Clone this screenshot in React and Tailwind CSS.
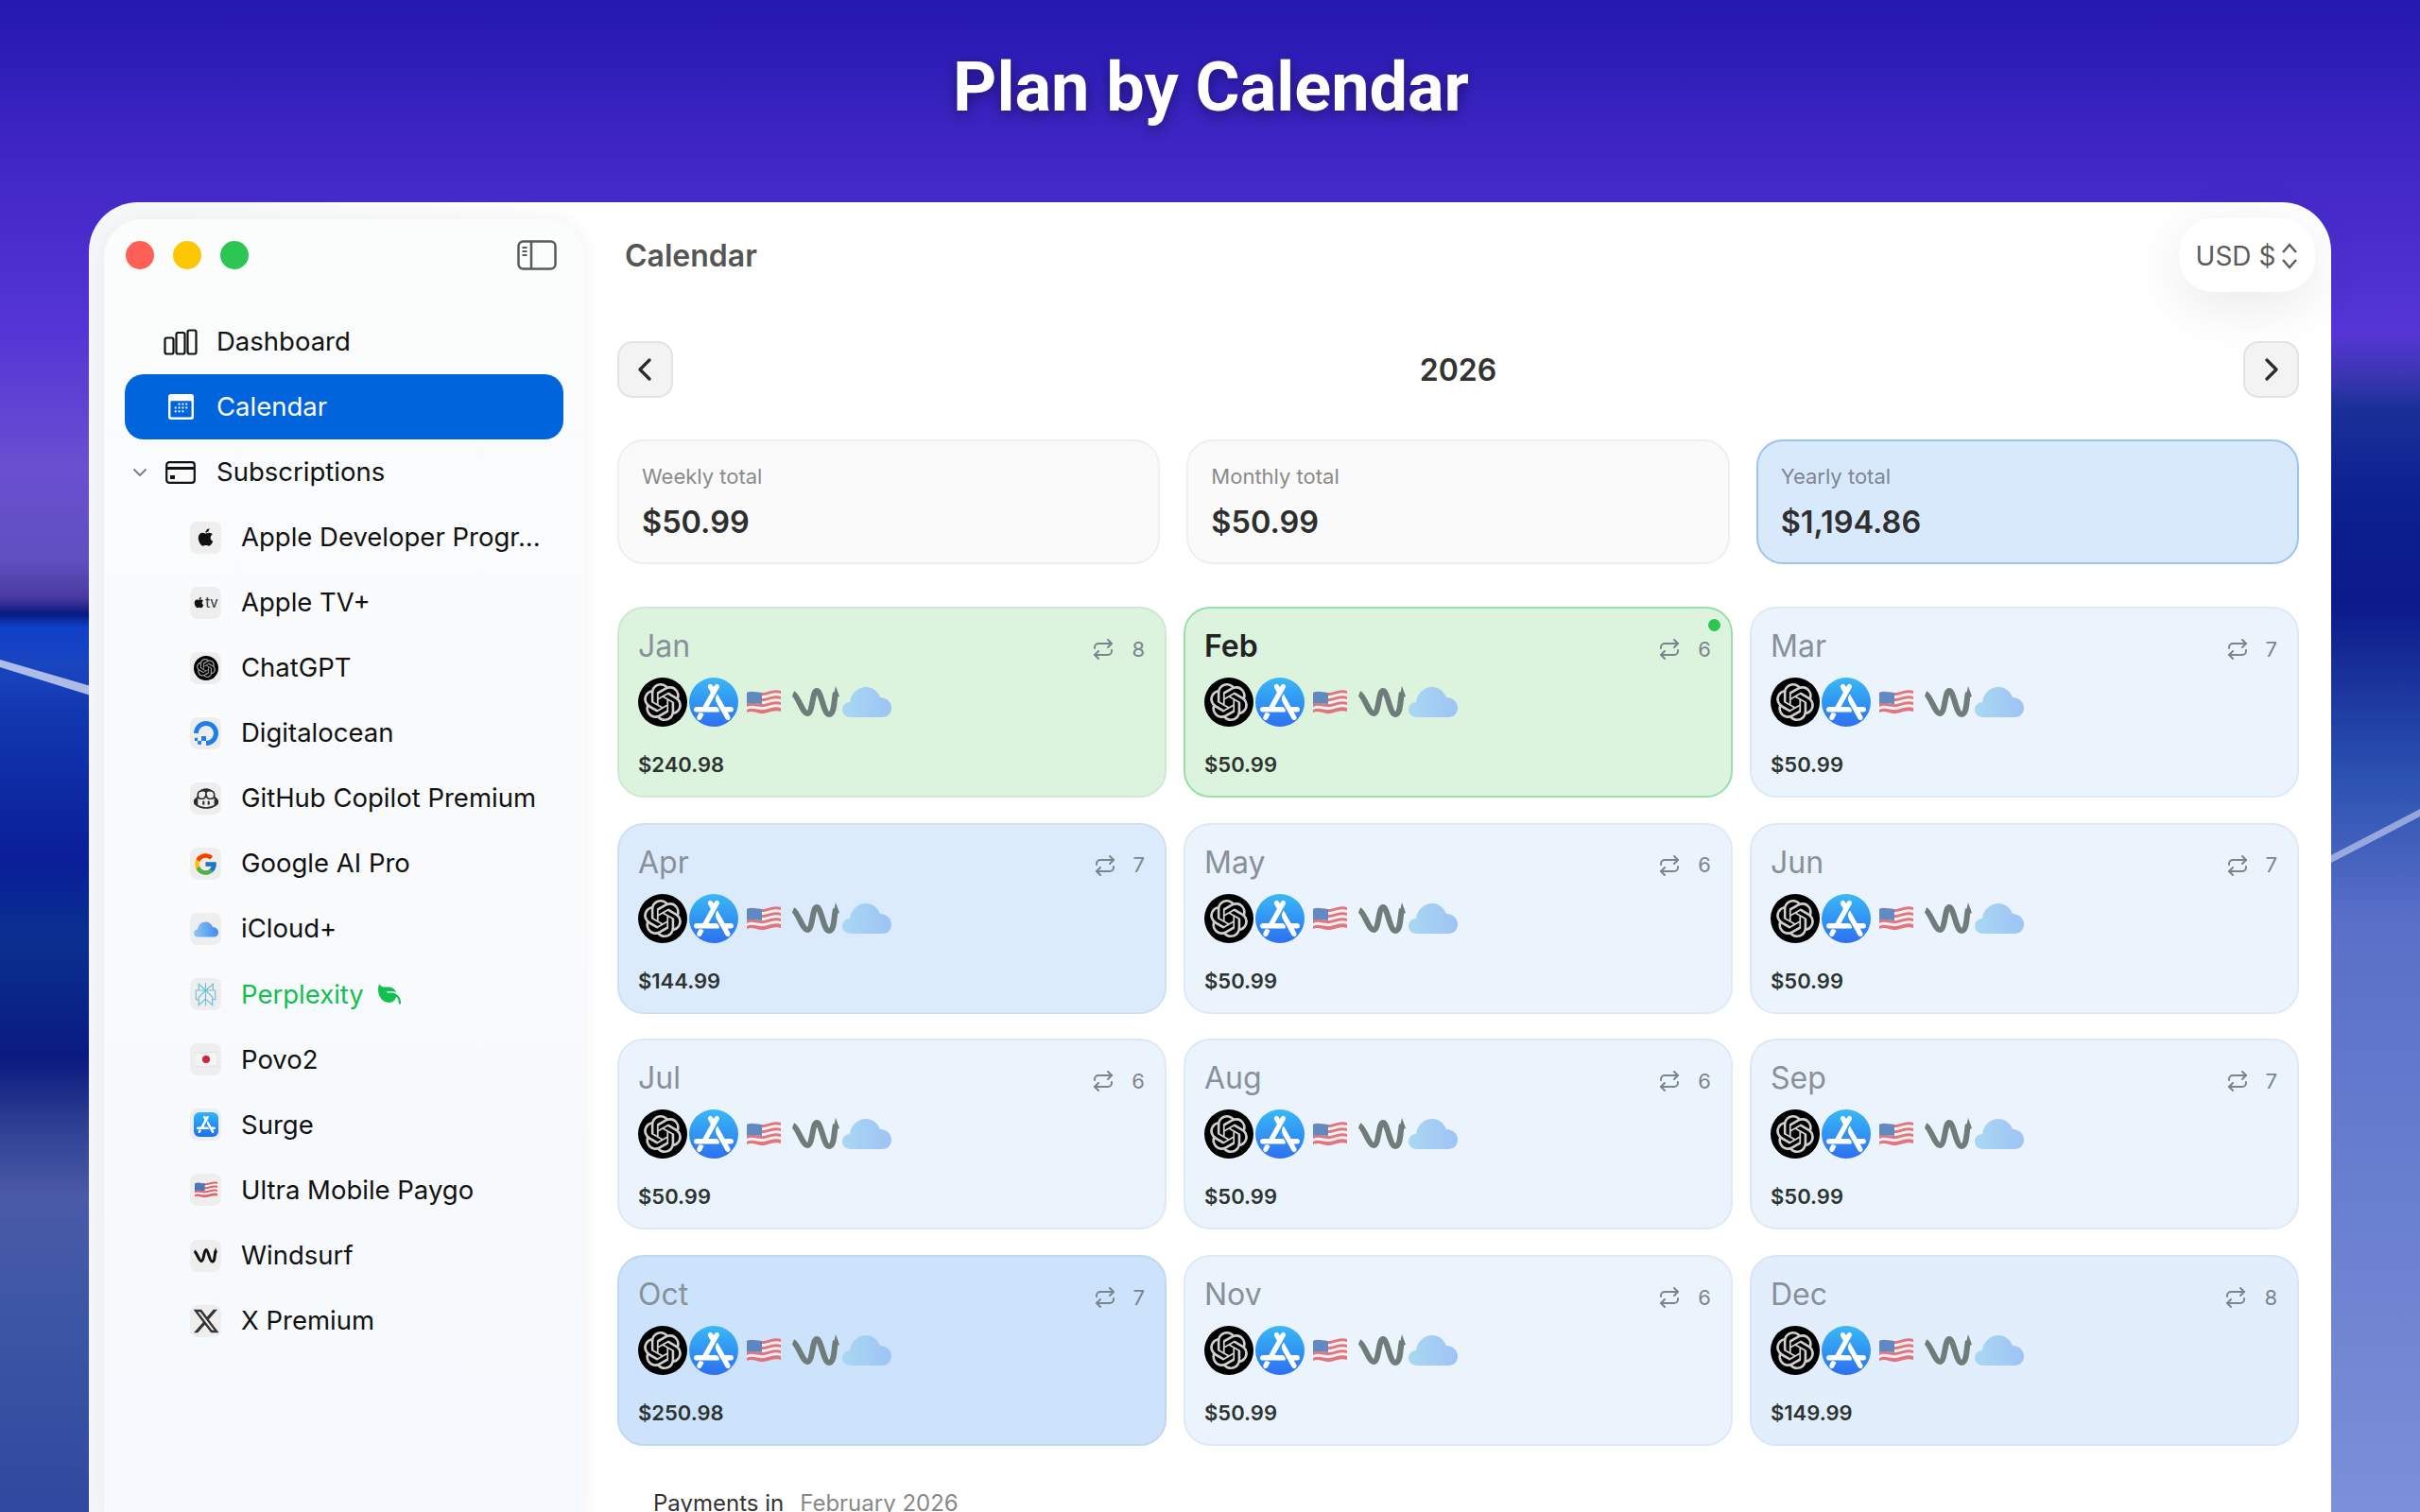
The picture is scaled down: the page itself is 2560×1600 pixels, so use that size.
import React from "react";
import { ChevronDown, ChevronLeft, ChevronRight, Repeat } from "lucide-react";
import { FaApple, FaLeaf, FaXTwitter } from "react-icons/fa6";
import { FcGoogle } from "react-icons/fc";
import { SiAppstore, SiDigitalocean, SiGithubcopilot, SiOpenai, SiPerplexity } from "react-icons/si";

const months = [
  { name: "Jan", count: 8, amount: "$240.98", tone: "green" },
  { name: "Feb", count: 6, amount: "$50.99", tone: "current" },
  { name: "Mar", count: 7, amount: "$50.99", tone: "light" },
  { name: "Apr", count: 7, amount: "$144.99", tone: "mid" },
  { name: "May", count: 6, amount: "$50.99", tone: "light" },
  { name: "Jun", count: 7, amount: "$50.99", tone: "light" },
  { name: "Jul", count: 6, amount: "$50.99", tone: "light" },
  { name: "Aug", count: 6, amount: "$50.99", tone: "light" },
  { name: "Sep", count: 7, amount: "$50.99", tone: "light" },
  { name: "Oct", count: 7, amount: "$250.98", tone: "strong" },
  { name: "Nov", count: 6, amount: "$50.99", tone: "light" },
  { name: "Dec", count: 8, amount: "$149.99", tone: "soft" },
];

const toneClass = {
  green: "bg-[#dcf3de] border-[#cfe8d3]",
  current: "bg-[#dcf3de] border-[#9adfa8]",
  light: "bg-[#ebf3fd] border-[#dfe9f5]",
  soft: "bg-[#e3eefc] border-[#d8e5f5]",
  mid: "bg-[#dcebfc] border-[#d0e0f3]",
  strong: "bg-[#cde2fb] border-[#c0d7f1]",
};

const FlagUS = ({ className }) => (
  <svg viewBox="0 0 36 30" className={className}>
    <path d="M0 5c6-3 12 1 18 0s12-4 18-2v22c-6-2-12 1-18 2S6 23 0 26z" fill="#f4f1f1" />
    <path d="M0 5c6-3 12 1 18 0s12-4 18-2v3c-6-2-12 1-18 2S6 5 0 8zM0 11c6-3 12 1 18 0s12-4 18-2v3c-6-2-12 1-18 2S6 11 0 14zM0 17c6-3 12 1 18 0s12-4 18-2v3c-6-2-12 1-18 2S6 17 0 20zM0 23c6-3 12 1 18 0s12-4 18-2v4c-6-2-12 1-18 2S6 23 0 26z" fill="#e0616a" />
    <path d="M0 5c5-2 10 0 16 0v12c-6 0-11-2-16 0z" fill="#4a78b8" />
  </svg>
);

const FlagJP = ({ className }) => (
  <svg viewBox="0 0 36 30" className={className}>
    <path d="M0 5c6-2 12 1 18 0s12-3 18-1v22c-6-2-12 0-18 1S6 24 0 26z" fill="#f6f5f5" stroke="#d8d8d8" />
    <circle cx="18" cy="15" r="6" fill="#d5213f" />
  </svg>
);

const WindsurfMark = ({ className, color = "#6f7d7a" }) => (
  <svg viewBox="0 0 52 34" className={className}>
    <path d="M2 8C7 10 12 29 17 29C23 29 22 5 27 5C32 5 34 30 40 30C46 30 45 15 47 7" fill="none" stroke={color} strokeWidth="6" />
    <path d="M47 0l4 11-7 2z" fill={color} />
  </svg>
);

const CloudMark = ({ className, from = "#a9d8f2", to = "#9ec3f5" }) => (
  <svg viewBox="0 0 52 34" className={className}>
    <defs>
      <linearGradient id={`cl-${from.slice(1)}`} x1="0" x2="1" y1="0" y2="0">
        <stop offset="0" stopColor={from} />
        <stop offset="1" stopColor={to} />
      </linearGradient>
    </defs>
    <path d="M9 33C3 33 0 29 0 25c0-5 4-8 8-8 1-9 8-16 17-16 7 0 12 4 15 11 7 0 12 5 12 11s-4 10-10 10z" fill={`url(#cl-${from.slice(1)})`} />
  </svg>
);

const AppStoreGlyph = ({ size }) => <SiAppstore size={size} color="#ffffff" />;

const subscriptions = [
  { name: "Apple Developer Progr...", icon: <FaApple size={21} color="#111" /> },
  {
    name: "Apple TV+",
    icon: (
      <span className="flex items-center text-[15px] leading-none text-[#333]">
        <FaApple size={13} color="#111" />
        <span>tv</span>
      </span>
    ),
  },
  {
    name: "ChatGPT",
    icon: (
      <span className="flex h-[26px] w-[26px] items-center justify-center rounded-full bg-black">
        <SiOpenai size={20} color="#9a9a9a" />
      </span>
    ),
  },
  { name: "Digitalocean", icon: <SiDigitalocean size={26} color="#1f7fe8" /> },
  { name: "GitHub Copilot Premium", icon: <SiGithubcopilot size={26} color="#2b2b2b" /> },
  { name: "Google AI Pro", icon: <FcGoogle size={27} /> },
  { name: "iCloud+", icon: <CloudMark className="h-[17px] w-[26px]" from="#8fc8f5" to="#3f8bef" /> },
  { name: "Perplexity", icon: <SiPerplexity size={25} color="#72c5d2" />, green: true },
  { name: "Povo2", icon: <FlagJP className="h-[20px] w-[24px]" /> },
  {
    name: "Surge",
    icon: (
      <span className="flex h-[26px] w-[26px] items-center justify-center rounded-[6px] bg-gradient-to-b from-[#35b4f5] to-[#1e6ff0]">
        <AppStoreGlyph size={20} />
      </span>
    ),
  },
  { name: "Ultra Mobile Paygo", icon: <FlagUS className="h-[20px] w-[24px]" /> },
  { name: "Windsurf", icon: <WindsurfMark className="h-[17px] w-[27px]" color="#111" /> },
  { name: "X Premium", icon: <FaXTwitter size={30} color="#333" /> },
];

const SidebarToggle = () => (
  <svg viewBox="0 0 42 32" className="h-[32px] w-[42px]" fill="none" stroke="#5a5a5a" strokeWidth="2.5">
    <rect x="1.5" y="1.5" width="39" height="29" rx="5" />
    <path d="M15 1.5v29" />
    <path d="M5.5 8h5M5.5 12h5M5.5 16h5" strokeWidth="2" />
  </svg>
);

const DashboardIcon = () => (
  <svg viewBox="0 0 36 28" className="h-[28px] w-[36px]" fill="none" stroke="#111" strokeWidth="2.2">
    <rect x="1.5" y="9.5" width="9" height="17" rx="2" />
    <rect x="13.5" y="4" width="9" height="22.5" rx="2" />
    <rect x="25.5" y="1.5" width="9" height="25" rx="2" />
  </svg>
);

const CalendarIcon = () => (
  <svg viewBox="0 0 28 28" className="h-[27px] w-[27px]">
    <rect x="0" y="0" width="28" height="28" rx="3" fill="#fff" />
    <rect x="2.5" y="7.5" width="23" height="18" rx="1.5" fill="#0064dc" />
    <g fill="#fff">
      <rect x="11" y="10" width="2" height="2" />
      <rect x="15" y="10" width="2" height="2" />
      <rect x="19" y="10" width="2" height="2" />
      <rect x="7" y="14" width="2" height="2" />
      <rect x="11" y="14" width="2" height="2" />
      <rect x="15" y="14" width="2" height="2" />
      <rect x="19" y="14" width="2" height="2" />
      <rect x="7" y="18" width="2" height="2" />
      <rect x="11" y="18" width="2" height="2" />
      <rect x="15" y="18" width="2" height="2" />
    </g>
  </svg>
);

const CardIcon = () => (
  <svg viewBox="0 0 32 24" className="h-[24px] w-[32px]" fill="none" stroke="#111" strokeWidth="2.2">
    <rect x="1.2" y="1.2" width="29.6" height="21.6" rx="3" />
    <path d="M1.2 7.5h29.6" strokeWidth="3" />
    <rect x="5" y="15" width="5" height="4" fill="#111" stroke="none" />
  </svg>
);

const UpDownIcon = () => (
  <svg viewBox="0 0 18 28" className="h-[28px] w-[18px]" fill="none" stroke="#5c5c5c" strokeWidth="2.4">
    <path d="M2 10l7-8 7 8M2 18l7 8 7-8" />
  </svg>
);

const Sidebar = () => (
  <aside className="ml-[16px] mt-[18px] flex w-[508px] flex-col rounded-t-[40px] bg-gradient-to-b from-[#fbfcfc] to-[#f6f9fd] px-[22px] text-[27.5px] shadow-[0_0_18px_rgba(0,0,0,0.05)]">
    <div className="flex h-[95px] items-start justify-between pr-[7px] pl-[1px] pt-[22px]">
      <div className="mt-[1px] flex gap-[20px]">
        <span className="h-[30px] w-[30px] rounded-full bg-[#ff5f57]" />
        <span className="h-[30px] w-[30px] rounded-full bg-[#fcc602]" />
        <span className="h-[30px] w-[30px] rounded-full bg-[#2dc653]" />
      </div>
      <SidebarToggle />
    </div>
    <div className="flex h-[69px] items-center pl-[40px] text-[#111]">
      <span className="flex w-[38px] justify-center"><DashboardIcon /></span>
      <span className="ml-[19px]">Dashboard</span>
    </div>
    <div className="flex h-[69px] items-center rounded-[20px] bg-[#0064dc] pl-[40px] text-white">
      <span className="flex w-[38px] justify-center"><CalendarIcon /></span>
      <span className="ml-[19px]">Calendar</span>
    </div>
    <div className="flex h-[69px] items-center pl-[4px] text-[#111]">
      <span className="flex w-[24px] justify-center"><ChevronDown size={30} color="#808080" strokeWidth={2} /></span>
      <span className="ml-[12px] flex w-[38px] justify-center"><CardIcon /></span>
      <span className="ml-[19px]">Subscriptions</span>
    </div>
    {subscriptions.map((sub) => (
      <div key={sub.name} className="flex h-[69.1px] items-center pl-[69px]">
        <span className="flex h-[34px] w-[33px] items-center justify-center rounded-[8px] bg-[#eeeeee]">{sub.icon}</span>
        <span className={`ml-[21px] whitespace-nowrap ${sub.green ? "text-[#12bf4f]" : "text-[#111]"}`}>{sub.name}</span>
        {sub.green && <FaLeaf size={24} color="#12bf4f" className="ml-[15px] -scale-x-100" />}
      </div>
    ))}
  </aside>
);

const StatCard = ({ label, value, active }) => (
  <div
    className={`h-[132px] rounded-[28px] border-2 px-[24px] pt-[22px] ${
      active ? "border-[#98c5f0] bg-[#d9e9fc]" : "border-[#efefef] bg-[#fafafa]"
    }`}
  >
    <p className={`text-[22px] leading-[30px] ${active ? "text-[#7e8792]" : "text-[#8b8b8b]"}`}>{label}</p>
    <p className="mt-[12px] text-[32.5px] font-semibold leading-[44px] text-[#2e2e2e]">{value}</p>
  </div>
);

const MonthCard = ({ month }) => {
  const current = month.tone === "current";
  return (
    <div className={`relative flex h-[202px] flex-col rounded-[28px] border-2 pl-[20px] pr-[21px] ${toneClass[month.tone]}`}>
      {current && <span className="absolute right-[11px] top-[11px] h-[13px] w-[13px] rounded-full bg-[#2dc653]" />}
      <div className="mt-[20px] flex h-[40px] items-center justify-between">
        <span className={`text-[32px] ${current ? "font-semibold text-[#222]" : "text-[#88909a]"}`}>{month.name}</span>
        <span className="flex items-center gap-[18px] pt-[6px] text-[22px] text-[#7b858c]">
          <Repeat size={24} strokeWidth={2} />
          <span>{month.count}</span>
        </span>
      </div>
      <div className="mt-[13px] flex h-[52px] items-center">
        <span className="flex h-[52px] w-[52px] items-center justify-center rounded-full bg-black">
          <SiOpenai size={40} color="#cfcfcf" />
        </span>
        <span className="ml-[2px] flex h-[52px] w-[52px] items-center justify-center rounded-full bg-gradient-to-b from-[#3bb8f4] to-[#2f6ff0]">
          <AppStoreGlyph size={42} />
        </span>
        <FlagUS className="ml-[9px] h-[30px] w-[36px] opacity-85" />
        <WindsurfMark className="ml-[11px] h-[34px] w-[52px]" />
        <CloudMark className="ml-[2px] h-[34px] w-[52px]" />
      </div>
      <p className="mt-[25px] text-[22px] font-semibold leading-[30px] text-[#2c3330]">{month.amount}</p>
    </div>
  );
};

const Main = () => (
  <main className="ml-[35px] flex-1 pr-[34px] pt-[17px]">
    <div className="flex h-[78px] items-center justify-between">
      <h2 className="ml-[8px] pt-[2px] text-[32px] font-semibold text-[#555]">Calendar</h2>
      <div className="-mr-[17px] flex h-[78px] w-[144px] items-center justify-center gap-[6px] rounded-[36px] bg-white pt-[2px] text-[28px] text-[#5c5c5c] shadow-[0_14px_60px_rgba(0,0,0,0.09)]">
        <span>USD $</span>
        <UpDownIcon />
      </div>
    </div>
    <div className="mt-[52px] flex h-[60px] items-center justify-between">
      <button className="flex h-[60px] w-[59px] items-center justify-center rounded-[16px] border-2 border-[#e3e3e3] bg-[#f3f3f3] pr-[2px]">
        <ChevronLeft size={40} color="#2c2c2c" strokeWidth={2} />
      </button>
      <span className="pt-[1px] text-[32px] font-semibold text-[#333]">2026</span>
      <button className="flex h-[60px] w-[59px] items-center justify-center rounded-[16px] border-2 border-[#e3e3e3] bg-[#f3f3f3] pl-[2px]">
        <ChevronRight size={40} color="#2c2c2c" strokeWidth={2} />
      </button>
    </div>
    <div className="mt-[44px] grid grid-cols-3 gap-x-[28px]">
      <StatCard label="Weekly total" value="$50.99" />
      <StatCard label="Monthly total" value="$50.99" />
      <StatCard label="Yearly total" value="$1,194.86" active />
    </div>
    <div className="mt-[45px] grid grid-cols-3 gap-x-[18px] gap-y-[26.7px]">
      {months.map((month) => (
        <MonthCard key={month.name} month={month} />
      ))}
    </div>
    <p className="ml-[38px] mt-[45px] text-[24px] leading-[32px]">
      <span className="text-[#333]">Payments in</span>
      <span className="ml-[17px] text-[#888]">February 2026</span>
    </p>
  </main>
);

export default function App() {
  return (
    <div className="relative h-[1600px] w-[2560px] overflow-hidden font-['Inter','Liberation_Sans',sans-serif] text-[28px] [background:linear-gradient(180deg,#2418b0_0%,#3f26c4_10%,#5535d5_22%,#6a4fd0_31%,#6050c0_37%,#4a3aa0_39.5%,#081a80_40.6%,#1040c8_41.5%,#1a45c0_44%,#1238b0_47%,#0a1e98_57%,#0a3090_62%,#0a1a80_70%,#2c3c90_74%,#4a5aa8_79%,#3a56a4_88%,#30489f_100%)_left/50%_100%_no-repeat,linear-gradient(180deg,#2418b0_0%,#3f26c4_10%,#5535d5_22%,#3a35b0_25%,#1a3098_27%,#0c2090_33%,#0c1a8a_40%,#2a50b0_51%,#5a70c8_61%,#7a90d8_100%)_right/50%_100%_no-repeat]">
      <svg className="absolute left-0 top-0 h-[1600px] w-[2560px]" viewBox="0 0 2560 1600" fill="none">
        <path d="M0 698L96 726L96 736L0 706z" fill="#c8d2ee" opacity="0.85" />
        <path d="M2560 856L2464 906L2464 914L2560 864z" fill="#dfe6f8" opacity="0.55" />
      </svg>
      <div className="relative flex h-[214px] items-start justify-center">
        <h1 className="ml-[2px] mt-[50px] font-['Roboto',sans-serif] text-[72px] font-bold leading-[86px] text-white [text-shadow:0_4px_14px_rgba(0,0,0,0.4)]">
          Plan by Calendar
        </h1>
      </div>
      <div className="relative ml-[94px] flex h-[1386px] w-[2372px] rounded-t-[52px] bg-[linear-gradient(90deg,#f4f5f7_0%,#f6f7f8_1%,#ffffff_24%)]">
        <Sidebar />
        <Main />
      </div>
    </div>
  );
}
